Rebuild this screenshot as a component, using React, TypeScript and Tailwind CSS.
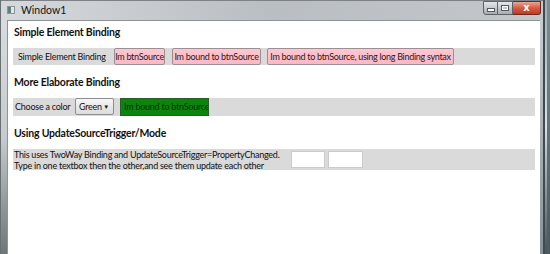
import React from "react";

const font = { fontFamily: 'Lato, "Open Sans", sans-serif' };

function PinkButton({ w, children }: { w: string; children: React.ReactNode }) {
  return (
    <div
      className={`${w} h-full flex items-center justify-center px-[1px] whitespace-nowrap rounded-[2px] border border-[#9a8f92] bg-gradient-to-b from-[#ffc7d1] to-[#fbb8c4] text-[9px] tracking-[-0.3px] text-[#2a1a1d]`}
    >
      {children}
    </div>
  );
}

export default function App() {
  return (
    <div className="w-[550px] h-[254px] overflow-hidden flex bg-[#4f5f63]" style={font}>
      {/* Window */}
      <div className="w-[543px] h-full flex flex-col bg-gradient-to-b from-[#cdd2d6] via-[#b4babe] to-[#737b80] border-l border-[#6a6f73]">
        {/* Title bar */}
        <div className="h-[20px] flex items-start bg-gradient-to-r from-[#d6d9dc] via-[#b9bec2] to-[#c3c7ca] border-t border-[#7d8286]">
          <div className="ml-[6px] mt-[5px] w-[8px] h-[8px] flex border border-[#8c9296] bg-white">
            <div className="w-[3px] h-full bg-[#5f7f86]" />
            <div className="flex-1 h-full bg-[#dfe6e8]" />
          </div>
          <div className="ml-[6px] mt-[3px] text-[10.5px] leading-[13px] text-[#111]">Window1</div>
          <div className="flex-1" />
          <div className="flex mt-0 mr-[2px] h-[14px]">
            <div className="w-[15px] h-full flex items-center justify-center rounded-bl-[3px] border border-[#5d6266] bg-gradient-to-b from-[#e4e7ea] to-[#a7adb1]">
              <div className="w-[6px] h-[2px] mt-[4px] bg-white border border-[#55595c] box-content" />
            </div>
            <div className="w-[15px] h-full flex items-center justify-center border-y border-r border-[#5d6266] bg-gradient-to-b from-[#e4e7ea] to-[#a7adb1]">
              <div className="w-[6px] h-[4px] border-[1.5px] border-white outline outline-1 outline-[#55595c]" />
            </div>
            <div className="w-[28px] h-full flex items-center justify-center rounded-br-[3px] border-y border-r border-[#6b2a20] bg-gradient-to-b from-[#eca494] via-[#d35a44] to-[#c4381f]">
              <span className="text-[10px] leading-none font-bold text-white" style={{ fontFamily: '"DejaVu Sans", sans-serif' }}>
                x
              </span>
            </div>
          </div>
        </div>
        {/* Body */}
        <div className="flex-1 flex min-h-0">
          <div className="w-[6px] bg-gradient-to-b from-[#d8dcde] via-[#c6cbce] to-[#6e767a]" />
          <div className="flex-1 bg-white border-l border-t border-[#8e9396] pl-[5px] pr-[5px] pt-[3px] text-[#111]">
            <div className="h-[16px] leading-[16px] pl-[1px] text-[10.5px] tracking-[-0.2px] font-bold">Simple Element Binding</div>
            <div className="mt-[8px] h-[17px] flex items-center bg-[#dadada]">
              <div className="ml-[5px] w-[96px] text-[9px] tracking-[-0.25px] whitespace-nowrap">Simple Element Binding</div>
              <PinkButton w="w-[51px]">Im btnSource</PinkButton>
              <div className="w-[7px]" />
              <PinkButton w="w-[89px]">Im bound to btnSource</PinkButton>
              <div className="w-[6px]" />
              <PinkButton w="w-[187px]">Im bound to btnSource, using long Binding syntax</PinkButton>
            </div>

            <div className="mt-[9px] h-[16px] leading-[16px] pl-[1px] text-[10.5px] tracking-[-0.2px] font-bold">More Elaborate Binding</div>
            <div className="mt-[8px] h-[18px] flex items-center bg-[#dadada]">
              <div className="ml-[2px] w-[60px] text-[9px] tracking-[-0.25px] whitespace-nowrap">Choose a color</div>
              <div className="w-[39px] h-[17px] self-start flex items-center rounded-[2px] border border-[#8c8f92] bg-gradient-to-b from-[#f6f6f6] to-[#dcdcdc] pl-[3px] text-[9px] tracking-[-0.25px]">
                <span className="flex-1">Green</span>
                <span className="mr-[4px] text-[6px] leading-none">▼</span>
              </div>
              <div className="ml-[6px] w-[89px] h-full flex items-center px-[3px] whitespace-nowrap overflow-hidden bg-[#0a870a] border border-[#2b5a2b] text-[9px] tracking-[-0.25px] text-[#0c2a0c]">
                Im bound to btnSource
              </div>
            </div>

            <div className="mt-[9px] h-[16px] leading-[16px] pl-[1px] text-[10.5px] tracking-[-0.2px] font-bold">Using UpdateSourceTrigger/Mode</div>
            <div className="mt-[8px] h-[21px] flex items-start bg-[#dadada]">
              <div className="ml-[1px] w-[263px] text-[9px] tracking-[-0.25px] leading-[11px] whitespace-nowrap">
                <div>This uses TwoWay Binding and UpdateSourceTrigger=PropertyChanged.</div>
                <div>Type in one textbox then the other,and see them update each other</div>
              </div>
              <div className="ml-[14px] mt-[2px] w-[34px] h-[17px] bg-white border border-[#c9cccf]" />
              <div className="ml-[3px] mt-[2px] w-[35px] h-[17px] bg-white border border-[#c9cccf]" />
            </div>
          </div>
          <div className="w-[3px] bg-gradient-to-b from-[#c8cdd0] to-[#8a9296]" />
        </div>
      </div>
      {/* Desktop sliver */}
      <div className="flex-1 flex">
        <div className="w-[2px] bg-[#3e4a4e]" />
        <div className="w-[2px] bg-gradient-to-b from-[#9fb0b4] via-[#d5e3e6] to-[#46565a]" />
        <div className="flex-1 bg-gradient-to-b from-[#7d8f93] to-[#4a5a5e]" />
      </div>
    </div>
  );
}
